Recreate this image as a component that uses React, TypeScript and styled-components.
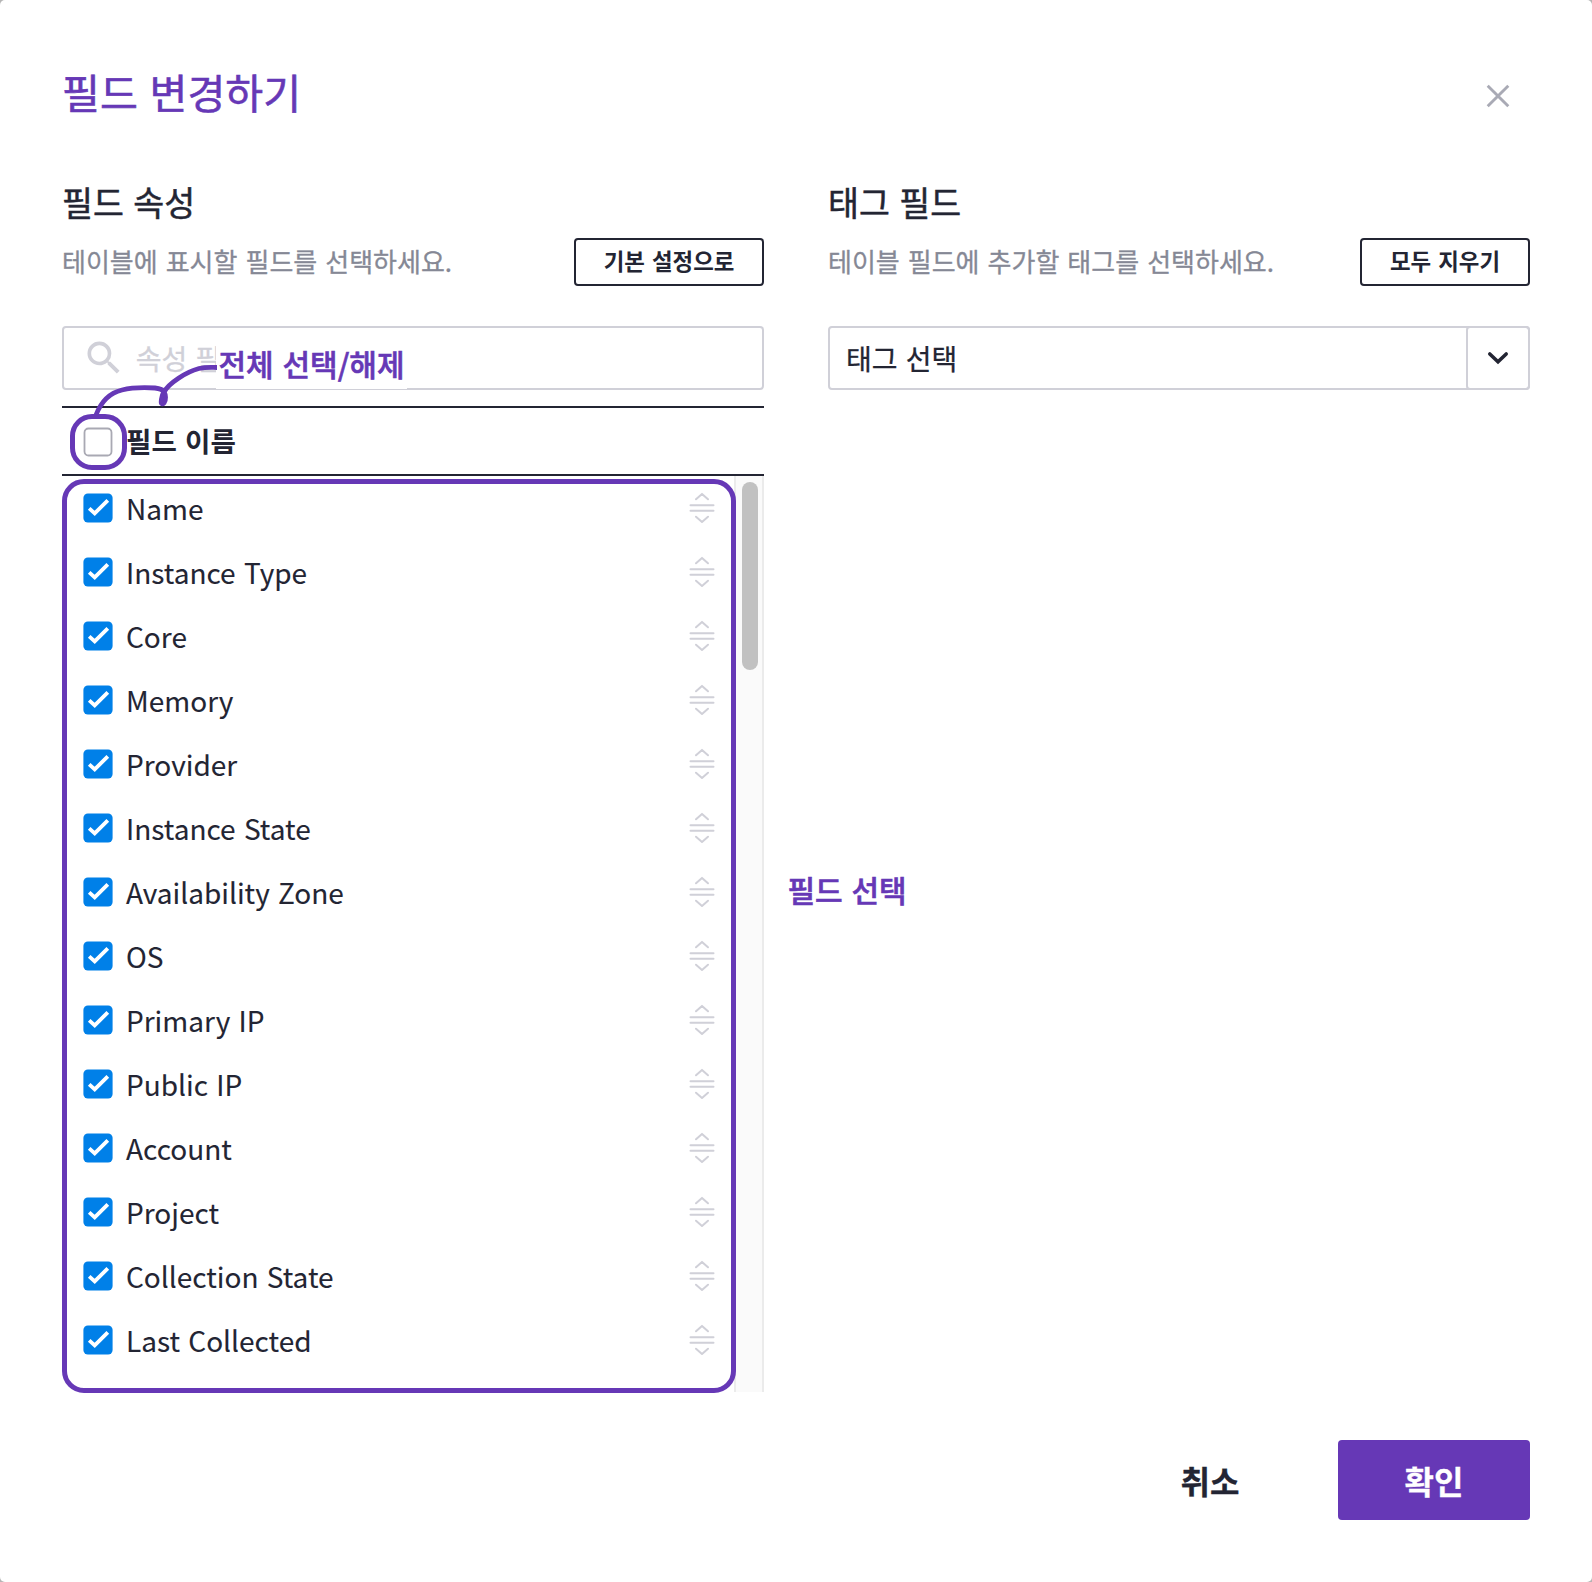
import React from 'react';
import styled, { createGlobalStyle } from 'styled-components';

const color = {
  violet: '#6638b6',
  ink: '#232533',
  muted: '#858895',
  line: '#d0d0d8',
  blue: '#0080e8',
};

const GlobalStyle = createGlobalStyle`
  * { box-sizing: border-box; }
  body {
    margin: 0;
    background: #b5b5b5;
    color: ${color.ink};
    font-family: "Noto Sans CJK KR", "Noto Sans", sans-serif;
    word-spacing: 2px;
    -webkit-text-stroke-width: 0.3px;
  }
  button { font-family: inherit; word-spacing: inherit; cursor: pointer; }
`;

const Modal = styled.main`
  position: relative;
  display: flex;
  flex-direction: column;
  width: 1592px;
  height: 1582px;
  padding: 62px;
  overflow: hidden;
  background: #fff;
  border-radius: 5px;
`;

const Header = styled.header`
  display: flex;
  align-items: center;
  justify-content: space-between;
  height: 64px;
`;

const Title = styled.h1`
  margin: 0;
  padding-bottom: 7px;
  font-size: 41.2px;
  line-height: 60px;
  font-weight: 400;
  word-spacing: 2.5px;
  -webkit-text-stroke-width: 0.6px;
  color: ${color.violet};
`;

const CloseButton = styled.button`
  display: flex;
  align-items: center;
  justify-content: center;
  width: 64px;
  height: 64px;
  margin-top: 4px;
  padding: 0;
  border: 0;
  background: none;
`;

const Columns = styled.div`
  display: grid;
  grid-template-columns: 702px 702px;
  column-gap: 64px;
  height: 1266px;
  padding-top: 50px;
`;

const Column = styled.section`
  display: flex;
  flex-direction: column;
`;

const SectionTitle = styled.h2`
  margin: 0;
  height: 52px;
  font-size: 33.6px;
  line-height: 52px;
  font-weight: 400;
  -webkit-text-stroke-width: 0.5px;
`;

const SectionBar = styled.div`
  display: flex;
  align-items: center;
  justify-content: space-between;
  height: 48px;
  margin-top: 10px;
`;

const Description = styled.p`
  margin: 0;
  padding-bottom: 2px;
  font-size: 26px;
  line-height: 40px;
  word-spacing: 2.2px;
  color: ${color.muted};
  white-space: nowrap;
`;

const OutlineButton = styled.button<{ $width: number }>`
  width: ${(p) => p.$width}px;
  height: 48px;
  padding: 0 0 5px;
  border: 2px solid ${color.ink};
  border-radius: 4px;
  background: #fff;
  color: ${color.ink};
  font-size: 22.4px;
  line-height: 40px;
  font-weight: 700;
  -webkit-text-stroke-width: 0;
`;

const Field = styled.div`
  display: flex;
  align-items: center;
  height: 64px;
  margin-top: 40px;
  border: 2px solid ${color.line};
  border-radius: 4px;
  font-size: 28px;
  line-height: 42px;
`;

const SearchIcon = styled.svg`
  width: 44px;
  height: 44px;
  margin-left: 18.2px;
  fill: ${color.line};
`;

const Placeholder = styled.span`
  margin-left: 9.5px;
  color: ${color.line};
`;

const SelectValue = styled.span`
  flex: 1;
  padding-left: 16px;
`;

const SelectToggle = styled.button`
  display: flex;
  align-items: center;
  justify-content: center;
  width: 64px;
  height: 64px;
  margin-right: -2px;
  padding: 0;
  border: 2px solid ${color.line};
  border-radius: 4px;
  background: none;
`;

const TableHead = styled.div`
  display: flex;
  align-items: center;
  height: 70px;
  margin-top: 16px;
  padding: 1px 0 0 21px;
  border-top: 2px solid ${color.ink};
  border-bottom: 2px solid ${color.ink};
  font-size: 27.6px;
  font-weight: 700;
  -webkit-text-stroke-width: 0;
`;

const HeadLabel = styled.span`
  padding-bottom: 3px;
  line-height: 40px;
`;

const ListFrame = styled.div`
  display: flex;
  height: 916px;
`;

const List = styled.ul`
  flex: 1;
  margin: 0;
  padding: 0;
  list-style: none;
`;

const Row = styled.li`
  display: flex;
  align-items: center;
  height: 64px;
  padding: 0 19px 0 21px;
  font-size: 28px;
  -webkit-text-stroke-width: 0.1px;
`;

const RowLabel = styled.span`
  flex: 1;
  line-height: 40px;
`;

const BoxIcon = styled.svg`
  flex: none;
  width: 30px;
  height: 30px;
  margin-right: 13px;
`;

const HandleIcon = styled.svg`
  width: 26px;
  height: 32px;
  fill: none;
  stroke: ${color.line};
  stroke-width: 2;
  stroke-linecap: round;
  stroke-linejoin: round;
`;

const ScrollTrack = styled.div`
  width: 30px;
  padding: 6px 4px 0 6px;
  border-left: 2px solid #ebebeb;
  border-right: 2px solid #ebebeb;
  background: #fafafa;
`;

const ScrollThumb = styled.div`
  width: 16px;
  height: 188px;
  border-radius: 8px;
  background: #c1c1c1;
`;

const Footer = styled.footer`
  display: flex;
  justify-content: flex-end;
  gap: 32px;
  padding-top: 48px;
`;

const ActionButton = styled.button<{ $primary?: boolean }>`
  width: 192px;
  height: 80px;
  padding: 0 0 1px;
  border: 0;
  border-radius: 4px;
  background: ${(p) => (p.$primary ? color.violet : 'transparent')};
  color: ${(p) => (p.$primary ? '#fff' : color.ink)};
  font-size: 32px;
  line-height: 48px;
  font-weight: 700;
`;

const Outline = styled.div<{ $x: number; $y: number; $w: number; $h: number }>`
  position: absolute;
  left: ${(p) => p.$x}px;
  top: ${(p) => p.$y}px;
  width: ${(p) => p.$w}px;
  height: ${(p) => p.$h}px;
  border: 5px solid ${color.violet};
  border-radius: 22px;
  pointer-events: none;
`;

const Note = styled.div<{ $x: number; $y: number; $w: number; $h: number }>`
  position: absolute;
  left: ${(p) => p.$x}px;
  top: ${(p) => p.$y}px;
  width: ${(p) => p.$w}px;
  height: ${(p) => p.$h}px;
  padding-left: 2.5px;
  background: #fff;
  color: ${color.violet};
  font-size: 30px;
  line-height: 42px;
  font-weight: 500;
  -webkit-text-stroke-width: 0.6px;
  white-space: nowrap;
`;

const Connector = styled.svg`
  position: absolute;
  left: 80px;
  top: 350px;
  width: 150px;
  height: 70px;
  fill: ${color.violet};
  stroke: ${color.violet};
  stroke-width: 4.8;
`;

const fields = [
  'Name', 'Instance Type', 'Core', 'Memory', 'Provider', 'Instance State', 'Availability Zone',
  'OS', 'Primary IP', 'Public IP', 'Account', 'Project', 'Collection State', 'Last Collected',
];

function Checkbox({ checked }: { checked?: boolean }) {
  return (
    <BoxIcon viewBox="0 0 30 30">
      {checked ? (
        <>
          <rect x="0.4" y="0.4" width="29.2" height="29.2" rx="4.5" fill={color.blue} />
          <path d="M6.2 15.4 L11.7 20.3 L24.8 7.4" fill="none" stroke="#fff" strokeWidth="3.8" />
        </>
      ) : (
        <rect x="1.5" y="1.5" width="27" height="27" rx="4" fill="#fff" stroke="#a9a9b3" strokeWidth="1.8" />
      )}
    </BoxIcon>
  );
}

function FieldRow({ name }: { name: string }) {
  return (
    <Row>
      <Checkbox checked />
      <RowLabel>{name}</RowLabel>
      <HandleIcon viewBox="0 0 26 32">
        <path d="M7 7.3 L13 1.9 L19 7.3 M1.5 13.3 H24.5 M1.5 18.7 H24.5 M7 24.7 L13 29.900 L19 24.7" />
      </HandleIcon>
    </Row>
  );
}

export default function App() {
  return (
    <>
      <GlobalStyle />
      <Modal>
        <Header>
          <Title>필드 변경하기</Title>
          <CloseButton aria-label="닫기">
            <svg width="24" height="24" viewBox="0 0 24 24" stroke="#a9aab5" strokeWidth="2.9">
              <path d="M1.7 1.7 L22.3 22.3 M22.3 1.7 L1.7 22.3" />
            </svg>
          </CloseButton>
        </Header>
        <Columns>
          <Column>
            <SectionTitle>필드 속성</SectionTitle>
            <SectionBar>
              <Description>테이블에 표시할 필드를 선택하세요.</Description>
              <OutlineButton $width={190}>기본 설정으로</OutlineButton>
            </SectionBar>
            <Field>
              <SearchIcon viewBox="0 0 24 24">
                <path d="M15.5 14h-.79l-.28-.27A6.471 6.471 0 0 0 16 9.5 6.5 6.5 0 1 0 9.5 16c1.61 0 3.09-.59 4.23-1.57l.27.28v.79l5 4.99L20.49 19l-4.99-5zm-6 0C7.01 14 5 11.99 5 9.5S7.01 5 9.5 5 14 7.01 14 9.5 11.99 14 9.5 14z" />
              </SearchIcon>
              <Placeholder>속성 필</Placeholder>
            </Field>
            <TableHead>
              <Checkbox />
              <HeadLabel>필드 이름</HeadLabel>
            </TableHead>
            <ListFrame>
              <List>
                {fields.map((name) => (
                  <FieldRow key={name} name={name} />
                ))}
              </List>
              <ScrollTrack>
                <ScrollThumb />
              </ScrollTrack>
            </ListFrame>
          </Column>
          <Column>
            <SectionTitle>태그 필드</SectionTitle>
            <SectionBar>
              <Description>테이블 필드에 추가할 태그를 선택하세요.</Description>
              <OutlineButton $width={170}>모두 지우기</OutlineButton>
            </SectionBar>
            <Field>
              <SelectValue>태그 선택</SelectValue>
              <SelectToggle aria-label="열기">
                <svg width="24" height="16" viewBox="0 0 24 16" fill="none" stroke={color.ink} strokeWidth="3.6" strokeLinecap="round">
                  <path d="M3.8 4 L12 11.8 L20.2 4" />
                </svg>
              </SelectToggle>
            </Field>
          </Column>
        </Columns>
        <Footer>
          <ActionButton>취소</ActionButton>
          <ActionButton $primary>확인</ActionButton>
        </Footer>

        <Note $x={216} $y={342} $w={191} $h={47}>전체 선택/해제</Note>
        <Note $x={785} $y={868} $w={124} $h={42}>필드 선택</Note>
        <Outline $x={69.5} $y={413.5} $w={57.5} $h={56.5} />
        <Outline $x={62} $y={479} $w={674} $h={914} />
        <Connector viewBox="80 350 150 70">
          <path fill="none" d="M96 415 C101 402 109 393 122 390 C134 387 147 387.5 155 388 C160 388.5 163 390 164 392 C169 383 186 372 199 368.500 C206 367 211 367.500 217 367.500" />
          <path strokeWidth="4" d="M164 391 C166.500 395 166.500 400 164.500 403 C163 405 160.800 404.500 160.800 402 C161 398 162 394 164 391 Z" />
        </Connector>
      </Modal>
    </>
  );
}
